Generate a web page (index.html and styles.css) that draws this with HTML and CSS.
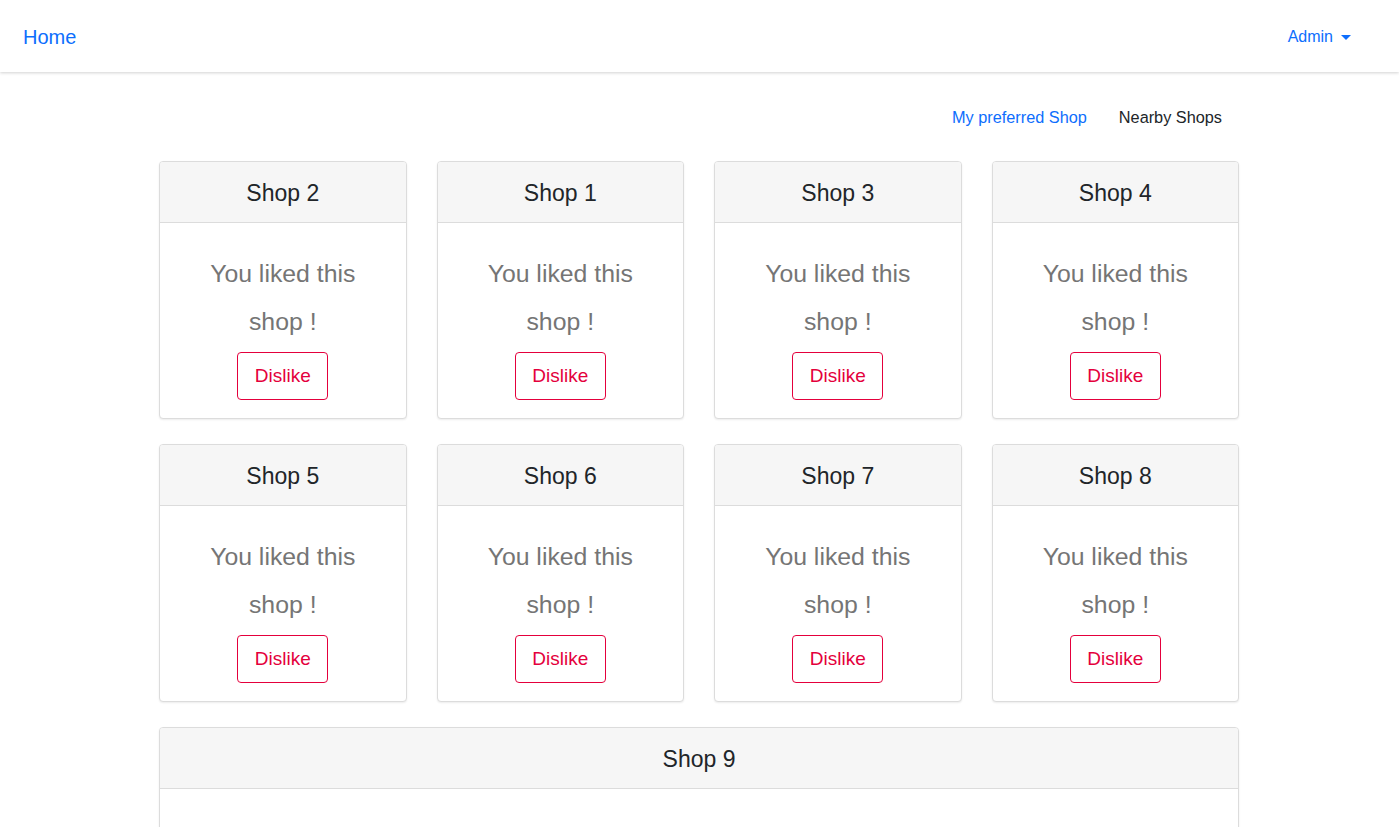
FILE: index.html
```html
<!DOCTYPE html>
<html>
<head>
<meta charset="utf-8">
<link rel="stylesheet" href="styles.css">
</head>
<body>
<nav class="navbar">
  <a class="brand" href="#">Home</a>
  <a class="admin" href="#">Admin <span class="caret"></span></a>
</nav>
<main class="container">
  <ul class="tabs">
    <li><a class="tab active" href="#">My preferred Shop</a></li>
    <li><a class="tab" href="#">Nearby Shops</a></li>
  </ul>
  <div class="grid">
    <div class="card"><div class="card-header">Shop 2</div><div class="card-body"><p class="liked">You liked this shop !</p><button class="btn">Dislike</button></div></div>
    <div class="card"><div class="card-header">Shop 1</div><div class="card-body"><p class="liked">You liked this shop !</p><button class="btn">Dislike</button></div></div>
    <div class="card"><div class="card-header">Shop 3</div><div class="card-body"><p class="liked">You liked this shop !</p><button class="btn">Dislike</button></div></div>
    <div class="card"><div class="card-header">Shop 4</div><div class="card-body"><p class="liked">You liked this shop !</p><button class="btn">Dislike</button></div></div>
    <div class="card"><div class="card-header">Shop 5</div><div class="card-body"><p class="liked">You liked this shop !</p><button class="btn">Dislike</button></div></div>
    <div class="card"><div class="card-header">Shop 6</div><div class="card-body"><p class="liked">You liked this shop !</p><button class="btn">Dislike</button></div></div>
    <div class="card"><div class="card-header">Shop 7</div><div class="card-body"><p class="liked">You liked this shop !</p><button class="btn">Dislike</button></div></div>
    <div class="card"><div class="card-header">Shop 8</div><div class="card-body"><p class="liked">You liked this shop !</p><button class="btn">Dislike</button></div></div>
    <div class="card wide"><div class="card-header">Shop 9</div><div class="card-body"><p class="liked">You liked this shop !</p><button class="btn">Dislike</button></div></div>
  </div>
</main>
</body>
</html>
```

FILE: styles.css
```css
* { box-sizing: border-box; }
html, body { margin: 0; padding: 0; }
body {
  font-family: "Liberation Sans", Arial, sans-serif;
  color: #212529;
  background: #fff;
}
a { text-decoration: none; }
.navbar {
  height: 72px;
  display: flex;
  align-items: center;
  justify-content: space-between;
  padding: 2px 48px 0 23px;
  background: #fff;
  box-shadow: 0 1px 3px rgba(0,0,0,0.18);
  position: relative;
  z-index: 2;
}
.brand { font-size: 20px; color: #0d6efd; }
.admin { color: #0d6efd; font-size: 16px; display: flex; align-items: center; }
.caret {
  display: inline-block;
  margin-left: 8px;
  width: 0; height: 0;
  border-left: 5px solid transparent;
  border-right: 5px solid transparent;
  border-top: 5px solid #0d6efd;
}
.container {
  width: 1111px;
  margin: 0 auto;
  padding: 27px 16px 0 15px;
}
.tabs {
  list-style: none;
  margin: 0;
  padding: 0;
  display: flex;
  justify-content: flex-end;
  margin-right: 1px;
}
.tab {
  display: block;
  padding: 8px 16px;
  font-size: 16.3px;
  line-height: 20px;
  color: #212529;
}
.tab.active { color: #0d6efd; }
.grid {
  display: grid;
  grid-template-columns: repeat(4, 1fr);
  column-gap: 30px;
  row-gap: 25px;
  margin-top: 26px;
}
.card {
  border: 1px solid #dcdcdc;
  border-radius: 4px;
  box-shadow: 0 1px 2px rgba(0,0,0,0.08);
  overflow: hidden;
  text-align: center;
  background: #fff;
}
.card.wide { grid-column: 1 / -1; }
.card-header {
  background: #f6f6f6;
  border-bottom: 1px solid #dcdcdc;
  height: 61px;
  padding-top: 3px;
  display: flex;
  align-items: center;
  justify-content: center;
  font-size: 23px;
  color: #212529;
}
.card-body {
  padding: 27px 20px 18px;
}
.liked {
  margin: 0 auto;
  font-size: 24.8px;
  line-height: 48px;
  color: #757575;
  max-width: 170px;
}
.btn {
  margin-top: 6px;
  font-family: inherit;
  font-size: 19px;
  color: #e4003c;
  background: #fff;
  border: 1px solid #e4003c;
  border-radius: 4px;
  width: 91px;
  height: 48px;
  padding: 0;
}
```
